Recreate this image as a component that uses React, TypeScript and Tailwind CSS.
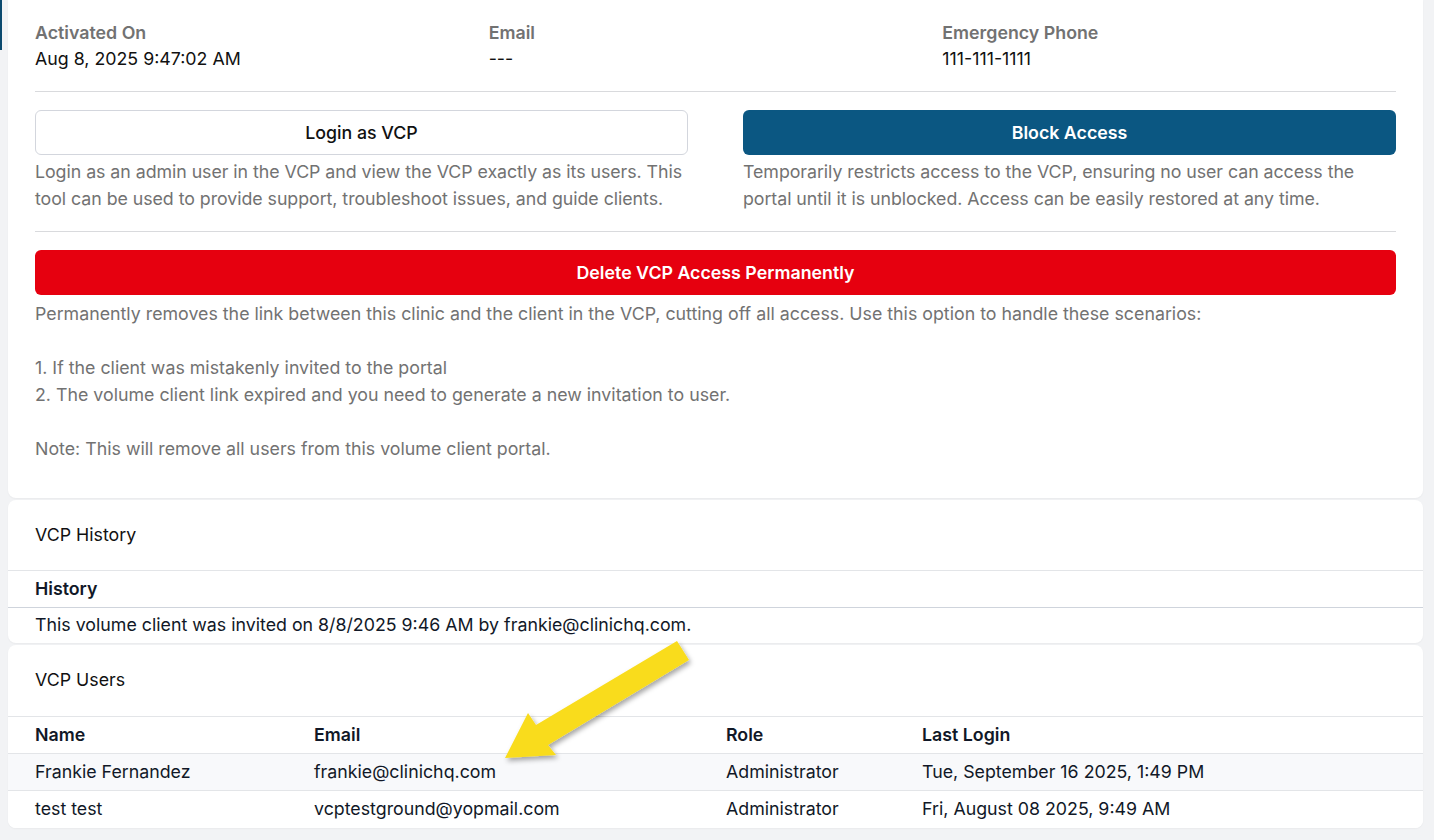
import React from "react";

const users = [
  { name: "Frankie Fernandez", email: "frankie@clinichq.com", role: "Administrator", lastLogin: "Tue, September 16 2025, 1:49 PM" },
  { name: "test test", email: "vcptestground@yopmail.com", role: "Administrator", lastLogin: "Fri, August 08 2025, 9:49 AM" },
];

const details = [
  { label: "Activated On", value: "Aug 8, 2025 9:47:02 AM" },
  { label: "Email", value: "---" },
  { label: "Emergency Phone", value: "111-111-1111" },
];

function HighlightArrow() {
  return (
    <svg
      className="pointer-events-none absolute left-0 top-0"
      width="1434"
      height="840"
      viewBox="0 0 1434 840"
    >
      <defs>
        <filter id="arrowShadow" x="-20%" y="-20%" width="140%" height="140%">
          <feDropShadow dx="2" dy="3" stdDeviation="2.5" floodColor="#000" floodOpacity="0.35" />
        </filter>
      </defs>
      <polygon
        points="505,758 528,713 536,725 677,641 689,660 548,745 556,755"
        fill="#f9dc1c"
        filter="url(#arrowShadow)"
      />
    </svg>
  );
}

export default function App() {
  return (
    <div className="relative min-h-[840px] w-full overflow-hidden bg-[#f2f3f5] font-['Inter',sans-serif] text-[17.8px]">
      {/* left nav indicator */}
      <div className="absolute left-0 top-0 h-[50px] w-[2px] bg-[#0b4a6f]" />

      <div className="flex flex-col gap-[2px] pl-[8px] pr-[11px]">
        {/* VCP details */}
        <div className="rounded-b-[8px] bg-white px-[27px] pb-[36px] pt-[20px] shadow-[0_1px_2px_rgba(0,0,0,0.04)]">
          <div className="grid grid-cols-3">
            {details.map((d) => (
              <div key={d.label} className="leading-[26px]">
                <div className="font-semibold text-[#727272]">{d.label}</div>
                <div className="text-[#111]">{d.value}</div>
              </div>
            ))}
          </div>

          <div className="mt-[19px] border-t border-[#d9dadd]" />

          <div className="mt-[18px] grid grid-cols-2 gap-[55px]">
            <div>
              <button className="h-[45px] w-full rounded-[6px] border border-[#d3d6dd] bg-white pt-[2px] font-medium text-[#111]">
                Login as VCP
              </button>
              <p className="mt-[3px] leading-[27px] tracking-[-0.05px] text-[#727272]">
                Login as an admin user in the VCP and view the VCP exactly as its users. This tool can be used to
                provide support, troubleshoot issues, and guide clients.
              </p>
            </div>
            <div>
              <button className="h-[45px] w-full rounded-[6px] bg-[#0b5782] pt-[2px] font-semibold text-white">
                Block Access
              </button>
              <p className="mt-[3px] leading-[27px] tracking-[-0.05px] text-[#727272]">
                Temporarily restricts access to the VCP, ensuring no user can access the portal until it is
                unblocked. Access can be easily restored at any time.
              </p>
            </div>
          </div>

          <div className="mt-[19px] border-t border-[#d9dadd]" />

          <button className="mt-[18px] h-[45px] w-full rounded-[6px] bg-[#e6000f] pt-[2px] font-semibold text-white">
            Delete VCP Access Permanently
          </button>
          <div className="mt-[5px] leading-[27px] text-[#727272]">
            <p>
              Permanently removes the link between this clinic and the client in the VCP, cutting off all access.
              Use this option to handle these scenarios:
            </p>
            <div className="h-[27px]" />
            <p>1. If the client was mistakenly invited to the portal</p>
            <p>2. The volume client link expired and you need to generate a new invitation to user.</p>
            <div className="h-[27px]" />
            <p>Note: This will remove all users from this volume client portal.</p>
          </div>
        </div>

        {/* VCP History */}
        <div className="overflow-hidden rounded-[8px] bg-white shadow-[0_1px_2px_rgba(0,0,0,0.04)]">
          <div className="flex h-[70px] items-center px-[27px] text-[#111]">VCP History</div>
          <div className="flex h-[37px] items-center border-t border-[#e3e5e8] px-[27px] font-semibold text-[#111827]">
            History
          </div>
          <div className="flex h-[36px] items-center border-t border-[#cfd4dc] px-[27px] text-[#111827]">
            This volume client was invited on 8/8/2025 9:46 AM by frankie@clinichq.com.
          </div>
        </div>

        {/* VCP Users */}
        <div className="overflow-hidden rounded-[8px] bg-white shadow-[0_1px_2px_rgba(0,0,0,0.04)]">
          <div className="flex h-[71px] items-center px-[27px] text-[#111]">VCP Users</div>
          <table className="w-full border-collapse text-left">
            <thead>
              <tr className="h-[37px] border-t border-[#e3e5e8] font-semibold text-[#111827]">
                <th className="w-[279px] pl-[27px] font-semibold">Name</th>
                <th className="w-[412px] pl-[27px] font-semibold">Email</th>
                <th className="w-[196px] pl-[27px] font-semibold">Role</th>
                <th className="pl-[27px] font-semibold">Last Login</th>
              </tr>
            </thead>
            <tbody>
              {users.map((u, i) => (
                <tr
                  key={u.email}
                  className={
                    i % 2 === 0
                      ? "h-[37px] border-t border-[#e3e5e8] bg-[#f8f9fb] text-[#111827]"
                      : "h-[37px] border-t border-[#e3e5e8] bg-white text-[#111827]"
                  }
                >
                  <td className="pl-[27px]">{u.name}</td>
                  <td className="pl-[27px]">{u.email}</td>
                  <td className="pl-[27px]">{u.role}</td>
                  <td className="pl-[27px]">{u.lastLogin}</td>
                </tr>
              ))}
            </tbody>
          </table>
        </div>
      </div>

      <HighlightArrow />
    </div>
  );
}
